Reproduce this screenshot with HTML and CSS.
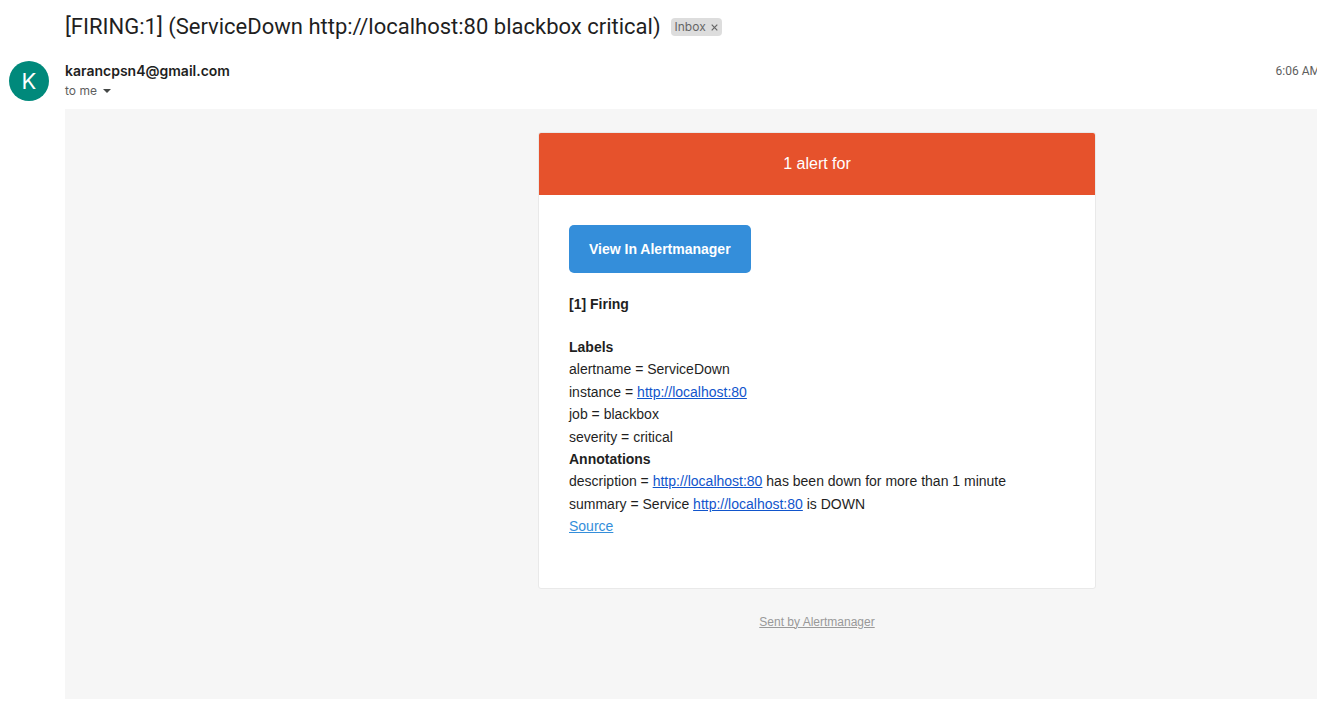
FILE: index.html
```html
<!DOCTYPE html>
<html lang="en">
<head>
<meta charset="utf-8">
<title>[FIRING:1] (ServiceDown http://localhost:80 blackbox critical)</title>
<link rel="stylesheet" href="styles.css">
</head>
<body>
<header class="subject">
  <h1 class="subject-text">[FIRING:1] (ServiceDown http://localhost:80 blackbox critical)</h1>
  <span class="tag">Inbox <button class="tag-close" type="button" aria-label="Remove label Inbox"><svg width="7" height="7" viewBox="0 0 7 7" aria-hidden="true"><path d="M.7.7l5.6 5.6M6.3.7L.7 6.3" stroke="#666" stroke-width="1.2"/></svg></button></span>
</header>
<main class="message">
  <div class="avatar">K</div>
  <div class="content">
    <div class="meta">
      <div class="sender">karancpsn4@gmail.com</div>
      <div class="time">6:06 AM</div>
    </div>
    <button class="recipient" type="button">to me <svg width="8" height="4" viewBox="0 0 8 4" aria-hidden="true"><path d="M0 0h8L4 4z" fill="#444746"/></svg></button>
    <div class="mail">
      <article class="card">
        <div class="banner">1 alert for</div>
        <div class="body">
          <a class="view" href="#">View In Alertmanager</a>
          <h2 class="firing">[1] Firing</h2>
          <div class="details">
            <strong>Labels</strong><br>
            alertname = ServiceDown<br>
            instance = <a class="link" href="#">http://localhost:80</a><br>
            job = blackbox<br>
            severity = critical<br>
            <strong>Annotations</strong><br>
            description = <a class="link" href="#">http://localhost:80</a> has been down for more than 1 minute<br>
            summary = Service <a class="link" href="#">http://localhost:80</a> is DOWN<br>
            <a class="source" href="#">Source</a>
          </div>
        </div>
      </article>
      <a class="sent" href="#">Sent by Alertmanager</a>
    </div>
  </div>
</main>
</body>
</html>
```
FILE: styles.css
```css
* { box-sizing: border-box; }
body {
  margin: 0;
  overflow-x: hidden;
  background: #fff;
  color: #1f1f1f;
  font-family: "Liberation Sans", Arial, sans-serif;
}
button { border: 0; padding: 0; background: none; font: inherit; color: inherit; }
.subject {
  display: flex;
  align-items: center;
  gap: 10px;
  padding: 13px 0 0 65px;
}
.subject-text {
  margin: 0;
  font: 400 22px/28px Roboto, sans-serif;
  white-space: nowrap;
}
.tag {
  display: flex;
  align-items: center;
  gap: 5px;
  height: 18px;
  padding: 0 4px;
  border-radius: 4px;
  background: #ddd;
  color: #666;
  font: 12px/18px Inter, sans-serif;
}
.tag-close { display: flex; }
.message { display: flex; padding: 20px 0 0 9px; }
.avatar {
  flex: none;
  width: 40px;
  height: 40px;
  border-radius: 50%;
  background: #00897b;
  color: #fff;
  font: 22px/40px Inter, sans-serif;
  text-align: center;
}
.content { flex: 1; min-width: 0; margin-left: 16px; }
.meta {
  display: flex;
  justify-content: space-between;
  line-height: 20px;
}
.sender { font: 600 14px/20px Inter, sans-serif; }
.time {
  margin-right: -3px;
  color: #5e5e5e;
  font: 12px/20px Roboto, sans-serif;
  white-space: nowrap;
}
.recipient {
  display: flex;
  align-items: center;
  gap: 6px;
  height: 20px;
  color: #5e5e5e;
  font: 12px/20px Inter, sans-serif;
}
.mail {
  display: flex;
  flex-direction: column;
  align-items: center;
  margin-top: 8px;
  padding: 23px 0 68px 252px;
  background: #f6f6f6;
}
.card {
  width: 100%;
  max-width: 558px;
  border: 1px solid #e9e9e9;
  border-radius: 3px;
  background: #fff;
  overflow: hidden;
}
.banner {
  padding: 20px;
  background: #e6522c;
  color: #fff;
  font-size: 16px;
  line-height: 22px;
  text-align: center;
}
.body { padding: 30px 30px 50px; font-size: 14px; }
.view {
  display: inline-block;
  padding: 10px 20px;
  border-radius: 5px;
  background: #348eda;
  color: #fff;
  font-weight: 700;
  line-height: 28px;
  text-decoration: none;
}
.firing { margin: 20px 0; font-size: 14px; line-height: 23px; }
.details { line-height: 1.6; }
.link { color: #15c; }
.source { color: #348eda; }
.sent { margin-top: 24px; color: #999; font-size: 12px; line-height: 18px; }
```
